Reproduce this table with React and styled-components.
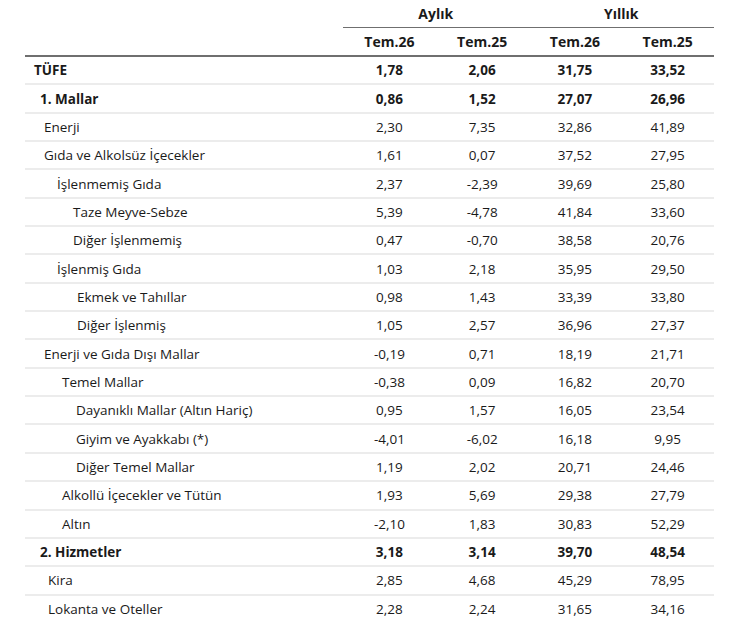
import React from 'react';
import styled, { createGlobalStyle } from 'styled-components';

const GlobalStyle = createGlobalStyle`
  body {
    margin: 0;
    background: #fff;
    font-family: "Open Sans", "Noto Sans", sans-serif;
    color: #1a1a1a;
  }
`;

const Wrapper = styled.div`
  padding: 0 36px 0 25px;
`;

const Table = styled.table`
  width: 689px;
  border-collapse: collapse;
  table-layout: fixed;
  font-size: 13.5px;
`;

const GroupCell = styled.th`
  height: 26.5px;
  font-weight: 700;
  font-size: 14px;
  text-align: center;
  vertical-align: middle;
  border-bottom: ${({ $line }) => ($line ? '1.5px solid #6f6f6f' : 'none')};
  padding: 0;
`;

const HeadCell = styled.th`
  height: 27.5px;
  font-weight: 700;
  font-size: 14px;
  text-align: center;
  border-bottom: 2px solid #6f6f6f;
  padding: 0;
`;

const Row = styled.tr`
  height: 28.35px;
  border-bottom: 2px solid #ececec;
  font-weight: ${({ $bold }) => ($bold ? 700 : 400)};

  &:last-child {
    border-bottom: 1.5px solid #ececec;
  }
`;

const Label = styled.td`
  padding: 0 0 0 ${({ $indent }) => $indent}px;
  white-space: nowrap;
`;

const Num = styled.td`
  text-align: center;
  padding: 0;
`;

const rows = [
  ['TÜFE', 9, true, ['1,78', '2,06', '31,75', '33,52']],
  ['1. Mallar', 15, true, ['0,86', '1,52', '27,07', '26,96']],
  ['Enerji', 19, false, ['2,30', '7,35', '32,86', '41,89']],
  ['Gıda ve Alkolsüz İçecekler', 19, false, ['1,61', '0,07', '37,52', '27,95']],
  ['İşlenmemiş Gıda', 32, false, ['2,37', '-2,39', '39,69', '25,80']],
  ['Taze Meyve-Sebze', 48, false, ['5,39', '-4,78', '41,84', '33,60']],
  ['Diğer İşlenmemiş', 48, false, ['0,47', '-0,70', '38,58', '20,76']],
  ['İşlenmiş Gıda', 32, false, ['1,03', '2,18', '35,95', '29,50']],
  ['Ekmek ve Tahıllar', 52, false, ['0,98', '1,43', '33,39', '33,80']],
  ['Diğer İşlenmiş', 52, false, ['1,05', '2,57', '36,96', '27,37']],
  ['Enerji ve Gıda Dışı Mallar', 19, false, ['-0,19', '0,71', '18,19', '21,71']],
  ['Temel Mallar', 37, false, ['-0,38', '0,09', '16,82', '20,70']],
  ['Dayanıklı Mallar (Altın Hariç)', 51, false, ['0,95', '1,57', '16,05', '23,54']],
  ['Giyim ve Ayakkabı (*)', 51, false, ['-4,01', '-6,02', '16,18', '9,95']],
  ['Diğer Temel Mallar', 51, false, ['1,19', '2,02', '20,71', '24,46']],
  ['Alkollü İçecekler ve Tütün', 37, false, ['1,93', '5,69', '29,38', '27,79']],
  ['Altın', 37, false, ['-2,10', '1,83', '30,83', '52,29']],
  ['2. Hizmetler', 15, true, ['3,18', '3,14', '39,70', '48,54']],
  ['Kira', 23, false, ['2,85', '4,68', '45,29', '78,95']],
  ['Lokanta ve Oteller', 23, false, ['2,28', '2,24', '31,65', '34,16']],
];

const App = () => {
  return (
    <Wrapper>
      <GlobalStyle />
      <Table>
        <colgroup>
          <col style={{ width: '318px' }} />
          <col />
          <col />
          <col />
          <col />
        </colgroup>
        <thead>
          <tr>
            <GroupCell />
            <GroupCell colSpan={2} $line>Aylık</GroupCell>
            <GroupCell colSpan={2} $line>Yıllık</GroupCell>
          </tr>
          <tr>
            <HeadCell />
            <HeadCell>Tem.26</HeadCell>
            <HeadCell>Tem.25</HeadCell>
            <HeadCell>Tem.26</HeadCell>
            <HeadCell>Tem.25</HeadCell>
          </tr>
        </thead>
        <tbody>
          {rows.map(([name, indent, bold, values]) => (
            <Row key={name} $bold={bold}>
              <Label $indent={indent}>{name}</Label>
              {values.map((v, i) => (
                <Num key={i}>{v}</Num>
              ))}
            </Row>
          ))}
        </tbody>
      </Table>
    </Wrapper>
  );
};

export default App;
